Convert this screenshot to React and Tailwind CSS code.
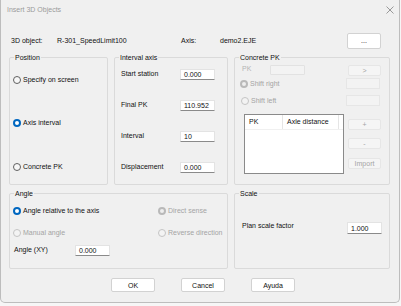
import clsx from 'clsx';

function Radio({ label, checked, disabled, className }) {
    return (
        <div className={clsx('flex items-center h-[10px] gap-[2px]', className)}>
            <span
                className={clsx(
                    'box-border w-[8px] h-[8px] rounded-full shrink-0',
                    checked && !disabled && 'border-[2.5px] border-[#0067c0] bg-white',
                    checked && disabled && 'border-[2.5px] border-[#b9b9b9] bg-[#eeeeee]',
                    !checked && !disabled && 'border border-[#5f5f5f] bg-[#f7f7f7]',
                    !checked && disabled && 'border border-[#c4c4c4] bg-[#f3f3f3]'
                )}
            />
            <span className={disabled ? 'text-[#a4a4a4]' : 'text-[#111]'}>{label}</span>
        </div>
    );
}

function Field({ value, className }) {
    return (
        <div className={clsx('h-[11px] bg-white border border-[#e3e3e3] border-b-[#8a8a8a] rounded-[1px] pl-[3px] flex items-center leading-none', className)}>
            {value}
        </div>
    );
}

function Btn({ children, disabled, className }) {
    return (
        <div
            className={clsx(
                'flex items-center justify-center rounded-[2px] border leading-none',
                disabled ? 'bg-[#f5f5f5] border-[#e6e6e6] text-[#a4a4a4]' : 'bg-white border-[#d2d2d2] text-[#111]',
                className
            )}
        >
            {children}
        </div>
    );
}

function Group({ title, className, children }) {
    return (
        <div className={clsx('relative border border-[#dadada] rounded-[2px]', className)}>
            <span className="absolute -top-[5px] left-[4px] bg-[#f0f0f0] px-[1px] leading-[9px] text-[#111]">{title}</span>
            {children}
        </div>
    );
}

export default function App() {
    return (
        <div className="w-[401px] h-[306px] bg-[#f6f6f6] font-['Liberation_Sans',Arial,sans-serif] text-[7px] text-[#111]">
            <div className="w-[400px] h-[303px] bg-[#f0f0f0] border-l border-r border-b border-[#bdbdbd] rounded-b-[5px] flex flex-col">
                {/* title bar */}
                <div className="h-[21px] flex items-center justify-between pl-[6px] pr-[5px]">
                    <span className="text-[#9b9b9b]">Insert 3D Objects</span>
                    <svg width="8" height="8" viewBox="0 0 8 8" className="mt-[-1px]">
                        <path d="M0.5 0.5 L7.5 7.5 M7.5 0.5 L0.5 7.5" stroke="#8f8f8f" strokeWidth="0.9" />
                    </svg>
                </div>

                {/* object row */}
                <div className="mt-[12px] h-[16px] flex pl-[10px]">
                    <span className="w-[46px] mt-[3px] leading-[9px]">3D object:</span>
                    <span className="w-[124px] mt-[3px] leading-[9px]">R-301_SpeedLimit100</span>
                    <span className="w-[39px] mt-[3px] leading-[9px]">Axis:</span>
                    <span className="w-[127px] mt-[3px] leading-[9px]">demo2.EJE</span>
                    <Btn className="w-[34px] h-[16px] pb-[2px]">...</Btn>
                </div>

                {/* groups row */}
                <div className="mt-[8px] flex pl-[8px] gap-[6px]">
                    <Group title="Position" className="w-[99px] h-[128px]">
                        <div className="flex flex-col pt-[17px] pl-[3px]">
                            <Radio label="Specify on screen" />
                            <Radio label="Axis interval" checked className="mt-[33px]" />
                            <Radio label="Concrete PK" className="mt-[34px]" />
                        </div>
                    </Group>

                    <Group title="Interval axis" className="w-[114px] h-[128px]">
                        <div className="flex flex-col pt-[11px] pl-[6px] gap-[20px]">
                            {[
                                ['Start station', '0.000'],
                                ['Final PK', '110.952'],
                                ['Interval', '10'],
                                ['Displacement', '0.000'],
                            ].map(([label, value]) => (
                                <div key={label} className="flex items-center h-[11px]">
                                    <span className="w-[59px]">{label}</span>
                                    <Field value={value} className="w-[35px]" />
                                </div>
                            ))}
                        </div>
                    </Group>

                    <Group title="Concrete PK" className="w-[156px] h-[128px]">
                        <div className="flex pt-[6px] pl-[7px] pr-[8px] justify-between">
                            <div className="flex flex-col">
                                <div className="flex items-center h-[11px]">
                                    <span className="w-[28px] text-[#b4b4b4]">PK</span>
                                    <div className="w-[35px] h-[10px] border border-[#e2e2e2] bg-[#f3f3f3] rounded-[1px]" />
                                </div>
                                <Radio label="Shift right" checked disabled className="mt-[4px] -ml-[2px]" />
                                <Radio label="Shift left" disabled className="mt-[7px] -ml-[1px]" />
                                <div className="mt-[8px] ml-[2px] w-[100px] h-[60px] border border-[#8a8a8a] bg-white">
                                    <div className="flex h-[15px] items-center border-b border-[#f0f0f0]">
                                        <span className="w-[38px] h-full flex items-center pl-[4px] border-r border-[#e5e5e5]">PK</span>
                                        <span className="w-[56px] h-full flex items-center pl-[4px] border-r border-[#e5e5e5]">Axle distance</span>
                                    </div>
                                </div>
                            </div>
                            <div className="flex flex-col">
                                <Btn disabled className="w-[33px] h-[11px] mt-[1px] ml-[2px]">&gt;</Btn>
                                <div className="w-[34px] h-[11px] mt-[2px] border border-[#e6e6e6] bg-[#f3f3f3]" />
                                <div className="w-[34px] h-[11px] mt-[6px] border border-[#e6e6e6] bg-[#f3f3f3]" />
                                <Btn disabled className="w-[33px] h-[11px] mt-[13px] ml-[2px]">+</Btn>
                                <Btn disabled className="w-[33px] h-[11px] mt-[8px] ml-[2px]">-</Btn>
                                <Btn disabled className="w-[33px] h-[11px] mt-[9px] ml-[2px]">Import</Btn>
                            </div>
                        </div>
                    </Group>
                </div>

                {/* angle / scale row */}
                <div className="mt-[8px] flex pl-[8px] gap-[6px]">
                    <Group title="Angle" className="w-[219px] h-[76px]">
                        <div className="grid grid-cols-[145px_1fr] pl-[3px] pt-[12px] gap-y-[12px]">
                            <Radio label="Angle relative to the axis" checked />
                            <Radio label="Direct sense" checked disabled />
                            <Radio label="Manual angle" disabled />
                            <Radio label="Reverse direction" disabled />
                        </div>
                        <div className="flex items-center mt-[7px] pl-[4px] h-[11px]">
                            <span className="w-[61px]">Angle (XY)</span>
                            <Field value="0.000" className="w-[35px]" />
                        </div>
                    </Group>

                    <Group title="Scale" className="w-[156px] h-[76px]">
                        <div className="flex items-center justify-between pl-[7px] pr-[7px] pt-[28px]">
                            <span className="-mt-[3px]">Plan scale factor</span>
                            <Field value="1.000" className="w-[35px] h-[12px]" />
                        </div>
                    </Group>
                </div>

                {/* dialog buttons */}
                <div className="mt-[9px] flex pl-[110px] gap-[26px]">
                    <Btn className="w-[44px] h-[14px]">OK</Btn>
                    <Btn className="w-[44px] h-[14px]">Cancel</Btn>
                    <Btn className="w-[44px] h-[14px]">Ayuda</Btn>
                </div>
            </div>
        </div>
    );
}
